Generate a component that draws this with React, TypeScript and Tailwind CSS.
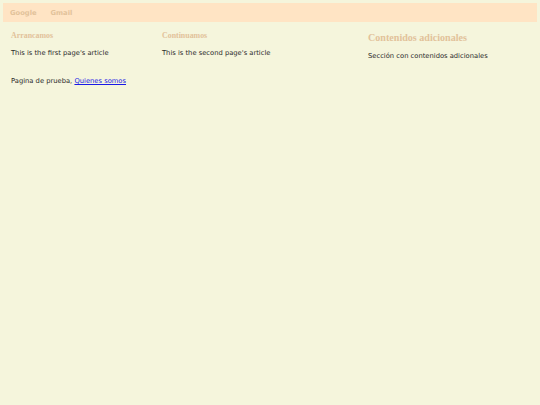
const body = "font-['DejaVu_Sans',Verdana,sans-serif] text-[6.75px] leading-[8px] text-[#2a2a2a]";
const h3 = "font-['Liberation_Serif','Times_New_Roman',serif] font-bold text-[7.9px] leading-[9px] text-[#e2c29a]";

export default function App() {
  return (
    <div className={`min-h-[405px] w-full bg-[#f5f5dc] p-[3px] ${body}`}>
      <nav className="flex h-[19px] items-center gap-[14px] bg-[#ffe4c4] px-[7px] pt-[1px] font-bold text-[#e2c29a]">
        <a href="#">Google</a>
        <a href="#">Gmail</a>
      </nav>

      <div className="flex">
        <div className="w-[357px] shrink-0 px-[8px]">
          <div className="flex">
            <article className="w-[151px] shrink-0">
              <h3 className={`${h3} mt-[9px]`}>Arrancamos</h3>
              <p className="mt-[8.5px]">This is the first page's article</p>
            </article>
            <article className="w-[151px] shrink-0">
              <h3 className={`${h3} mt-[9px]`}>Continuamos</h3>
              <p className="mt-[8.5px]">This is the second page's article</p>
            </article>
          </div>
          <footer className="mt-[20px]">
            Pagina de prueba,{" "}
            <a href="#" className="text-[#1a1ae6] underline">
              Quienes somos
            </a>
          </footer>
        </div>

        <aside className="flex-1 px-[8px]">
          <h2 className="mt-[10px] font-['Liberation_Serif','Times_New_Roman',serif] text-[10.1px] font-bold leading-[12px] text-[#e2c29a]">
            Contenidos adicionales
          </h2>
          <p className="mt-[7.5px]">Sección con contenidos adicionales</p>
        </aside>
      </div>
    </div>
  );
}
